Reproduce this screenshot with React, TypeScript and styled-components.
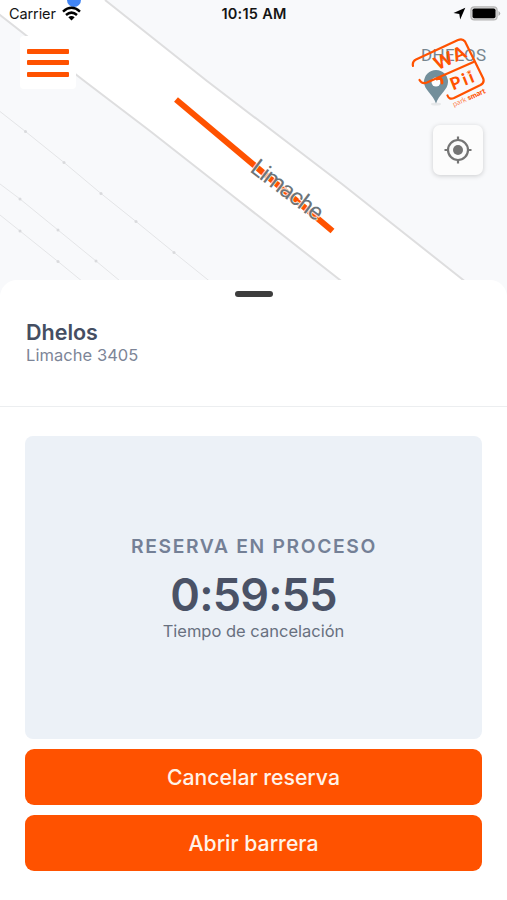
import React from "react";
import styled, { createGlobalStyle } from "styled-components";

const ORANGE = "#ff5200";

const GlobalStyle = createGlobalStyle`
  * { box-sizing: border-box; }
  body { margin: 0; background: #fff; font-family: Inter, "Liberation Sans", sans-serif; }
`;

const Screen = styled.div`
  position: relative;
  display: flex;
  flex-direction: column;
  width: 507px;
  height: 900px;
  overflow: hidden;
  background: #fff;
`;

const MapArea = styled.section`
  position: relative;
  flex: none;
  height: 300px;
  background: #f8f9fb;
`;

const MapDrawing = styled.svg`
  position: absolute;
  inset: 0;
`;

const StatusBar = styled.header`
  position: relative;
  display: grid;
  grid-template-columns: 1fr auto 1fr;
  align-items: center;
  height: 26px;
  padding: 0 8px 0 9px;
  color: #141414;
  font-size: 14px;
`;

const StatusGroup = styled.div<{ $end?: boolean }>`
  display: flex;
  align-items: center;
  justify-content: ${(p) => (p.$end ? "flex-end" : "flex-start")};
  gap: ${(p) => (p.$end ? "4px" : "6px")};
  margin-right: ${(p) => (p.$end ? "-2px" : "0")};
`;

const Carrier = styled.span`
  font-size: 14.5px;
  letter-spacing: -0.1px;
`;

const Clock = styled.span`
  font-size: 14.5px;
  font-weight: 600;
  letter-spacing: 0.25px;
`;

const MapControls = styled.div`
  position: relative;
  display: flex;
  justify-content: space-between;
  align-items: flex-start;
  padding: 10px 18px 0 20px;
`;

const MenuButton = styled.button`
  display: grid;
  place-content: center;
  gap: 6.5px;
  width: 56px;
  height: 53px;
  padding: 0;
  border: 0;
  border-radius: 4px;
  background: #fff;
`;

const MenuBar = styled.span`
  width: 42px;
  height: 5px;
  border-radius: 1px;
  background: ${ORANGE};
`;

const SideControls = styled.div`
  display: flex;
  flex-direction: column;
  align-items: flex-end;
  gap: 11px;
`;

const LocateButton = styled.button`
  display: grid;
  place-items: center;
  width: 50px;
  height: 50px;
  margin-right: 6px;
  padding: 0;
  border: 0;
  border-radius: 7px;
  background: #fcfcfc;
  box-shadow: 0 1px 5px rgba(0, 0, 0, 0.18);
`;

const Sheet = styled.main`
  position: relative;
  flex: 1;
  display: flex;
  flex-direction: column;
  margin-top: -20px;
  border-radius: 17px 17px 0 0;
  background: #fff;
`;

const SheetHeader = styled.div`
  display: flex;
  flex-direction: column;
  height: 127px;
  padding: 11px 26px 0;
  border-bottom: 1px solid #eceef0;
`;

const Handle = styled.span`
  align-self: center;
  width: 38px;
  height: 6px;
  border-radius: 3px;
  background: #3d3d3d;
`;

const PlaceName = styled.h1`
  margin: 20px 0 0;
  color: #454e62;
  font-size: 21.5px;
  font-weight: 600;
  line-height: 30px;
`;

const Address = styled.p`
  margin: 0;
  color: #7d8597;
  font-size: 16.5px;
  line-height: 17px;
  letter-spacing: 0.05px;
`;

const SheetBody = styled.div`
  display: flex;
  flex-direction: column;
  gap: 10px;
  padding: 29px 25px 0;
`;

const Reservation = styled.section`
  display: flex;
  flex-direction: column;
  align-items: center;
  height: 303px;
  padding-top: 98px;
  border-radius: 8px;
  background: #ecf1f7;
`;

const StatusTitle = styled.h2`
  margin: 0;
  padding-left: 1px;
  color: #748096;
  font-size: 19.3px;
  font-weight: 600;
  line-height: 24px;
  letter-spacing: 1.65px;
`;

const Countdown = styled.div`
  margin-top: 9px;
  color: #4a5266;
  font-size: 45px;
  font-weight: 600;
  line-height: 56px;
  letter-spacing: -0.8px;
`;

const CountdownLabel = styled.p`
  margin: -2px 0 0;
  color: #68707f;
  font-size: 16.5px;
  line-height: 20px;
`;

const ActionButton = styled.button`
  height: 56px;
  padding: 0;
  border: 0;
  border-radius: 9px;
  background: ${ORANGE};
  color: #fff3e9;
  font-family: inherit;
  font-size: 21.2px;
  font-weight: 500;
`;

const StreetMap = () => (
  <MapDrawing width="507" height="300" viewBox="0 0 507 300">
    <path d="M0 15 L83 80 L150 131 L238 200 L366 300 L488 300 L342 184 L207 81 L105 0 H0Z" fill="#fff" />
    <g fill="none" stroke="#dededf" strokeWidth="2">
      <path d="M-2 13.500 L83 80 L150 131 L238 200 L340 280 L366 300" />
      <path d="M105 0 L207 81 L342 184 L462 279 L488 300" />
    </g>
    <g fill="none" stroke="#e4e5e7" strokeWidth="1">
      <path d="M0 111.500 L25.500 131.500 L64 162.500 L101 193.500 L136 221.500 L174 252.500 L233 300" />
      <path d="M0 184 L20 199 L58 230 L96 261 L143 300" />
      <path d="M0 215 L20 231 L58 261.500 L105 300" />
    </g>
    <g fill="#d9dadd">
      <circle cx="25.500" cy="131.500" r="1.500" />
      <circle cx="64" cy="162.500" r="1.500" />
      <circle cx="101" cy="193.500" r="1.500" />
      <circle cx="136" cy="221.500" r="1.500" />
      <circle cx="174" cy="252.500" r="1.500" />
      <circle cx="20" cy="199" r="1.500" />
      <circle cx="58" cy="230" r="1.500" />
      <circle cx="96" cy="261" r="1.500" />
      <circle cx="20" cy="231" r="1.500" />
      <circle cx="58" cy="261.500" r="1.500" />
    </g>
    <circle cx="74" cy="0" r="7" fill="#4285f4" />
    <path d="M176 99.500 L332.500 231" stroke={ORANGE} strokeWidth="6" fill="none" />
    <text
      transform="translate(249 171) rotate(37)"
      fontFamily="Roboto, sans-serif"
      fontSize="24"
      textLength="84"
      fill="#6c7479"
      stroke="#fff"
      strokeWidth="2"
      strokeOpacity="0.800"
      paintOrder="stroke"
    >
      Limache
    </text>
    <text x="421" y="60.500" fontFamily="Roboto, sans-serif" fontSize="17" textLength="65" fill="#77858e">
      DHELOS
    </text>
    <ellipse cx="436" cy="104" rx="5" ry="1.500" fill="#e6e8ea" />
    <path d="M436 103.500 C433 94 424 90 424 82 A12 12 0 0 1 448 82 C448 90 439 94 436 103.500Z" fill="#738f9b" />
    <circle cx="436" cy="82" r="4.500" fill="#fff" />
  </MapDrawing>
);

const WifiIcon = () => (
  <svg width="19" height="15" viewBox="0 0 19 15">
    <g fill="none" stroke="#000" strokeWidth="2.500">
      <path d="M1 5.600 Q9.500 -2 18 5.600" />
      <path d="M4 9 Q9.500 4.200 15 9" />
    </g>
    <path d="M6.300 11.300 Q9.500 8.800 12.700 11.300 L9.500 14.500Z" fill="#000" />
  </svg>
);

const LocationArrow = () => (
  <svg width="13" height="13" viewBox="0 0 13 13">
    <path d="M12.300 .7 L.5 6 L6.300 7 L7.200 12.500Z" fill="#000" />
  </svg>
);

const BatteryIcon = () => (
  <svg width="31" height="15" viewBox="0 0 31 15">
    <rect x=".9" y=".9" width="26.200" height="13" rx="3.500" fill="#ddd" stroke="#b4b4b4" strokeWidth="1.200" />
    <rect x="2.500" y="2.500" width="23" height="9.800" rx="1.800" fill="#000" />
    <path d="M28.500 5 Q32 7.500 28.500 10Z" fill="#aaa" />
  </svg>
);

const BrandLogo = () => (
  <svg width="78" height="78" viewBox="411 37 78 78">
    <g fill="none" stroke={ORANGE} strokeWidth="2.200" strokeLinecap="round" strokeLinejoin="round">
      <path d="M413 67 Q412 62.500 416 60.500 L458 41 Q462.500 39 465 42.500 L483 79 Q485 83.500 480.500 86 L454 99 Q449 101 447.500 96.500" />
      <path d="M419.500 81 Q422 85.500 427 83.500 L473.500 63" />
      <path d="M437 80 L440 79 Q442 80 442 84" strokeWidth="2.800" />
    </g>
    <g fill={ORANGE} fontFamily="Lato, sans-serif" fontWeight="900">
      <text transform="translate(437.500 71.500) rotate(-25)" fontSize="18" textLength="33">
        WA
      </text>
      <text transform="translate(453 91.500) rotate(-22)" fontSize="17" textLength="24">
        Pii
      </text>
      <text transform="translate(454 108) rotate(-24)" fontSize="7.500" textLength="35">
        <tspan fontWeight="400" fillOpacity="0.700">park </tspan>
        <tspan>smart</tspan>
      </text>
    </g>
    <path d="M466.500 73.500 l4 -1.800 M467.500 75 l3 -1.200" stroke="#ff9c68" strokeWidth="1" />
  </svg>
);

const LocateIcon = () => (
  <svg width="28" height="28" viewBox="0 0 28 28">
    <g fill="none" stroke="#757575" strokeWidth="2.200">
      <circle cx="14" cy="14" r="10" />
      <path d="M14 .5 V5 M14 23 V27.500 M.5 14 H5 M23 14 H27.500" />
    </g>
    <circle cx="14" cy="14" r="5" fill="#757575" />
  </svg>
);

export default function App() {
  return (
    <>
      <GlobalStyle />
      <Screen>
        <MapArea>
          <StreetMap />
          <StatusBar>
            <StatusGroup>
              <Carrier>Carrier</Carrier>
              <WifiIcon />
            </StatusGroup>
            <Clock>10:15 AM</Clock>
            <StatusGroup $end>
              <LocationArrow />
              <BatteryIcon />
            </StatusGroup>
          </StatusBar>
          <MapControls>
            <MenuButton aria-label="Menú">
              <MenuBar />
              <MenuBar />
              <MenuBar />
            </MenuButton>
            <SideControls>
              <BrandLogo />
              <LocateButton aria-label="Mi ubicación">
                <LocateIcon />
              </LocateButton>
            </SideControls>
          </MapControls>
        </MapArea>
        <Sheet>
          <SheetHeader>
            <Handle />
            <PlaceName>Dhelos</PlaceName>
            <Address>Limache 3405</Address>
          </SheetHeader>
          <SheetBody>
            <Reservation>
              <StatusTitle>RESERVA EN PROCESO</StatusTitle>
              <Countdown>0:59:55</Countdown>
              <CountdownLabel>Tiempo de cancelación</CountdownLabel>
            </Reservation>
            <ActionButton>Cancelar reserva</ActionButton>
            <ActionButton>Abrir barrera</ActionButton>
          </SheetBody>
        </Sheet>
      </Screen>
    </>
  );
}
